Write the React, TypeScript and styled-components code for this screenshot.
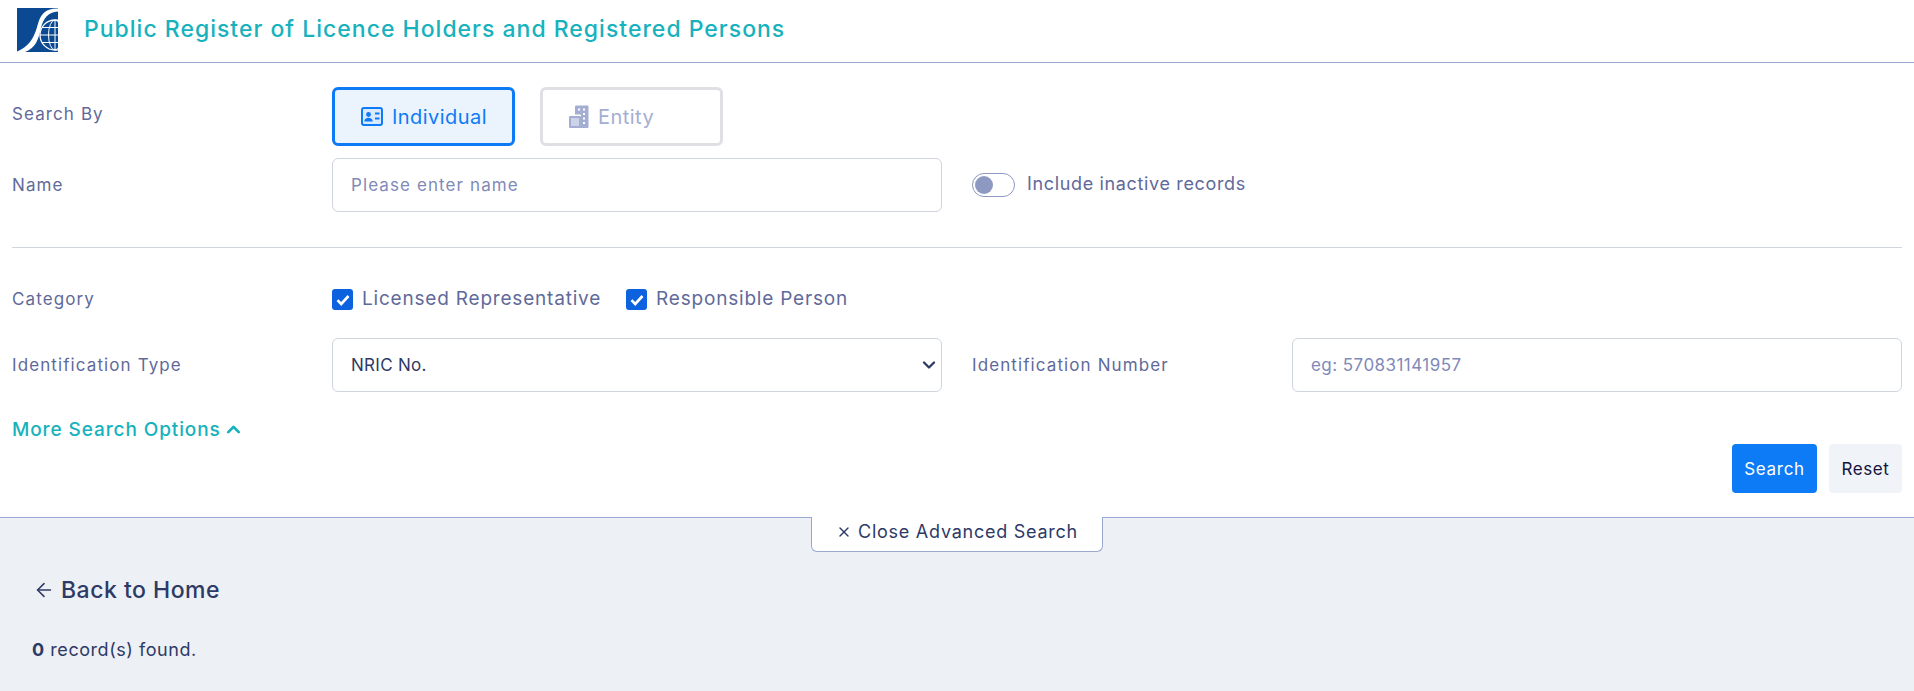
import styled, { createGlobalStyle } from 'styled-components';
import { ChevronDown, ChevronUp, X, ArrowLeft } from 'lucide-react';

const GlobalStyle = createGlobalStyle`
  html, body {
    margin: 0;
    padding: 0;
    background: #edf0f5;
  }
  * {
    box-sizing: border-box;
  }
  body, input, select, button {
    font-family: Inter, "Noto Sans", sans-serif;
  }
`;

function Logo() {
  return (
    <svg width="42" height="45" viewBox="0 0 42 45">
      <defs>
        <clipPath id="logoClip">
          <rect x="0" y="0" width="41" height="44" />
        </clipPath>
      </defs>
      <g clipPath="url(#logoClip)">
        <rect x="0" y="0" width="41" height="44" fill="#0b4a93" />
        <g fill="none" stroke="#fff" strokeWidth="1">
          <circle cx="38" cy="27" r="15" strokeWidth="1.3" />
          <ellipse cx="38" cy="27" rx="6.5" ry="15" />
          <path d="M38 12v30M23 27H41M25 19.5h16M25 34.5h16" />
        </g>
        <path d="M41 0.5C30 0 24.5 5 21.5 14C18.5 24 16 37 0 43.5V44H8C19 40 21.5 31 24 20C26 11 31 4 41 3.5Z" fill="#fff" />
      </g>
    </svg>
  );
}

function IdCardIcon() {
  return (
    <svg width="22" height="19" viewBox="0 0 22 19">
      <rect x="1" y="1" width="20" height="17" rx="2" fill="#dbe9fc" stroke="#0d7bf5" strokeWidth="2" />
      <circle cx="7.5" cy="7.5" r="2.4" fill="#0d7bf5" />
      <path d="M3.3 14.5c0-5 8.4-5 8.4 0z" fill="#0d7bf5" />
      <path d="M14 6.5h4.5M14 11.5h4.5" stroke="#0d7bf5" strokeWidth="2" />
    </svg>
  );
}

function BuildingIcon() {
  return (
    <svg width="20" height="23" viewBox="0 0 20 23">
      <path d="M6 1.5a1 1 0 0 1 1-1h11.5a1 1 0 0 1 1 1V22a1 1 0 0 1-1 1H12V10.5a1 1 0 0 0-1-1H6z" fill="#a4aed2" />
      <path d="M1 11h10a1 1 0 0 1 1 1v11H1a1 1 0 0 1-1-1V12a1 1 0 0 1 1-1z" fill="#a4aed2" />
      <rect x="2" y="13" width="8" height="8" fill="#cdd3e7" />
      <path d="M9 3.5h2v2H9zM14 3.5h2v2h-2zM14 8h2v2h-2zM14 12.5h2v2h-2zM14 17h2v2h-2z" fill="#fff" />
    </svg>
  );
}

function CheckMark() {
  return (
    <svg width="14" height="12" viewBox="0 0 14 12">
      <path d="M1.5 6.2 5.2 10 12.5 2" fill="none" stroke="#fff" strokeWidth="2.6" />
    </svg>
  );
}

export default function App() {
  return (
    <>
      <GlobalStyle />
      <StHeader>
        <Logo />
        <StTitle>Public Register of Licence Holders and Registered Persons</StTitle>
      </StHeader>
      <StPanel>
        <StSearchByRow>
          <StSearchByLabel>Search By</StSearchByLabel>
          <StModeGroup>
            <StModeButton $active>
              <IdCardIcon />
              Individual
            </StModeButton>
            <StModeButton>
              <BuildingIcon />
              Entity
            </StModeButton>
          </StModeGroup>
        </StSearchByRow>
        <StFieldRow>
          <StLabel>Name</StLabel>
          <StInput $spacing={1.1} placeholder="Please enter name" />
          <StToggleCell>
            <StToggle>
              <StKnob />
            </StToggle>
            <StToggleLabel>Include inactive records</StToggleLabel>
          </StToggleCell>
        </StFieldRow>
        <StDivider />
        <StCategoryRow>
          <StLabel>Category</StLabel>
          <StChecks>
            <StCheckItem>
              <StCheckBox>
                <CheckMark />
              </StCheckBox>
              Licensed Representative
            </StCheckItem>
            <StCheckItem>
              <StCheckBox>
                <CheckMark />
              </StCheckBox>
              Responsible Person
            </StCheckItem>
          </StChecks>
        </StCategoryRow>
        <StFieldRow>
          <StLabel>Identification Type</StLabel>
          <StSelectWrap>
            <StSelect defaultValue="nric">
              <option value="nric">NRIC No.</option>
            </StSelect>
            <StSelectArrow>
              <ChevronDown size={20} strokeWidth={2.8} color="#2e3a66" />
            </StSelectArrow>
          </StSelectWrap>
          <StLabel>Identification Number</StLabel>
          <StInput $spacing={0.45} placeholder="eg: 570831141957" />
        </StFieldRow>
        <StMoreLink>
          More Search Options
          <ChevronUp size={21} strokeWidth={3.2} />
        </StMoreLink>
        <StActions>
          <StSearchButton>Search</StSearchButton>
          <StResetButton>Reset</StResetButton>
        </StActions>
      </StPanel>
      <StResults>
        <StCloseTab>
          <X size={16} strokeWidth={2} />
          Close Advanced Search
        </StCloseTab>
        <StBackLink>
          <ArrowLeft size={22} strokeWidth={1.7} />
          Back to Home
        </StBackLink>
        <StRecords>
          <b>0</b> record(s) found.
        </StRecords>
      </StResults>
    </>
  );
}

const StHeader = styled.header`
  display: flex;
  align-items: center;
  gap: 25px;
  height: 63px;
  padding: 0 0 1px 17px;
  background: #fff;
  border-bottom: 1px solid #9aa8cf;
`;

const StTitle = styled.h1`
  margin: 0 0 3px;
  font-size: 23px;
  font-weight: 500;
  letter-spacing: 1px;
  color: #17b2bd;
`;

const StPanel = styled.section`
  display: flex;
  flex-direction: column;
  height: 455px;
  padding: 24px 12px 0;
  background: #fff;
  border-bottom: 1px solid #9aa8cf;
`;

const StSearchByRow = styled.div`
  display: grid;
  grid-template-columns: 320px 1fr;
  height: 59px;
`;

const StLabel = styled.span`
  align-self: center;
  font-size: 17px;
  letter-spacing: 1.1px;
  color: #5f6a9a;
`;

const StSearchByLabel = styled(StLabel)`
  margin-bottom: 6px;
`;

const StModeGroup = styled.div`
  display: flex;
  gap: 25px;
`;

const StModeButton = styled.button<{ $active?: boolean }>`
  display: flex;
  align-items: center;
  gap: 9px;
  width: 183px;
  height: 59px;
  padding: 0 0 0 26px;
  border: 3px solid ${(p) => (p.$active ? '#0d7bf5' : '#dfe0e3')};
  border-radius: 6px;
  background: ${(p) => (p.$active ? '#ebf3fd' : '#fff')};
  color: ${(p) => (p.$active ? '#0d7bf5' : '#a4aed2')};
  font-size: 20px;
  letter-spacing: 0.45px;
`;

const StFieldRow = styled.div`
  display: grid;
  grid-template-columns: 320px 610px 350px 610px;
  height: 54px;
  margin-top: 12px;

  & > :nth-child(3) {
    margin-left: 30px;
  }
`;

const StInput = styled.input<{ $spacing: number }>`
  width: 100%;
  height: 54px;
  padding: 0 18px;
  border: 1px solid #d0d5e0;
  border-radius: 6px;
  background: #fff;
  font-size: 17px;
  letter-spacing: ${(p) => p.$spacing}px;
  color: #2e3a66;
  outline: none;

  &::placeholder {
    color: #7f8ab8;
    opacity: 1;
  }
`;

const StToggleCell = styled.div`
  display: flex;
  align-items: center;
  gap: 12px;
  grid-column: span 2;
`;

const StToggle = styled.div`
  display: flex;
  align-items: center;
  width: 43px;
  height: 24px;
  padding: 0 2px;
  border: 1px solid #8d99c0;
  border-radius: 12px;
  background: #fff;
`;

const StKnob = styled.div`
  width: 18px;
  height: 18px;
  border-radius: 50%;
  background: #8d99c0;
`;

const StToggleLabel = styled.span`
  margin-bottom: 3px;
  font-size: 18px;
  letter-spacing: 0.65px;
  color: #5f6a9a;
`;

const StDivider = styled.hr`
  width: 100%;
  margin: 35px 0 0;
  border: 0;
  border-top: 1px solid #d0d5e0;
`;

const StCategoryRow = styled.div`
  display: grid;
  grid-template-columns: 320px 1fr;
  height: 24px;
  margin: 38px 0 16px;

  & > :first-child {
    padding-top: 2px;
  }
`;

const StChecks = styled.div`
  display: flex;
  gap: 25px;
`;

const StCheckItem = styled.label`
  display: flex;
  align-items: center;
  gap: 9px;
  font-size: 19px;
  letter-spacing: 0.8px;
  color: #5f6a9a;
`;

const StCheckBox = styled.span`
  display: flex;
  align-items: center;
  justify-content: center;
  width: 21px;
  height: 21px;
  margin-top: 3px;
  border-radius: 3px;
  background: #0d62e0;
`;

const StSelectWrap = styled.div`
  position: relative;
  height: 54px;
`;

const StSelect = styled.select`
  width: 100%;
  height: 54px;
  padding: 0 18px;
  appearance: none;
  border: 1px solid #d0d5e0;
  border-radius: 6px;
  background: #fff;
  font-size: 17px;
  letter-spacing: 0.3px;
  color: #2e3a66;
`;

const StSelectArrow = styled.span`
  position: absolute;
  top: 17px;
  right: 3px;
  display: flex;
  pointer-events: none;
`;

const StMoreLink = styled.a`
  display: flex;
  align-items: center;
  gap: 2px;
  margin-top: 25px;
  height: 24px;
  font-size: 19px;
  font-weight: 500;
  letter-spacing: 0.9px;
  color: #17b2bd;
`;

const StActions = styled.div`
  display: flex;
  justify-content: flex-end;
  gap: 12px;
  margin-top: 3px;
`;

const StSearchButton = styled.button`
  width: 85px;
  height: 49px;
  border: 0;
  border-radius: 4px;
  background: #0d7bf5;
  color: #fff;
  font-size: 17px;
  letter-spacing: 0.7px;
`;

const StResetButton = styled.button`
  width: 73px;
  height: 49px;
  border: 0;
  border-radius: 4px;
  background: #f0f3f8;
  color: #14143f;
  font-size: 17px;
  letter-spacing: 0.6px;
`;

const StResults = styled.section`
  position: relative;
  display: flex;
  flex-direction: column;
  height: 173px;
  padding: 57px 32px 0;
  background: #edf0f5;
`;

const StCloseTab = styled.div`
  position: absolute;
  top: -1px;
  left: 811px;
  display: flex;
  align-items: center;
  justify-content: center;
  gap: 6px;
  width: 292px;
  height: 35px;
  padding-bottom: 5px;
  border: 1px solid #9aa8cf;
  border-top: 0;
  border-radius: 0 0 6px 6px;
  background: #fff;
  font-size: 18px;
  letter-spacing: 0.75px;
  color: #2e3a66;
`;

const StBackLink = styled.a`
  display: flex;
  align-items: center;
  gap: 6px;
  margin-left: 1px;
  height: 30px;
  font-size: 23px;
  font-weight: 500;
  letter-spacing: 0.5px;
  color: #2e3a66;
`;

const StRecords = styled.p`
  margin: 34px 0 0;
  font-size: 18px;
  letter-spacing: 0.55px;
  color: #2e3a66;
`;
